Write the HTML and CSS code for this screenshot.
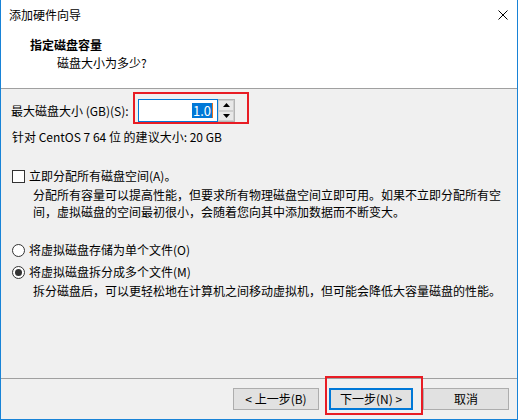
FILE: index.html
```html
<!DOCTYPE html>
<html lang="zh-CN">
  <head>
    <meta charset="UTF-8" />
    <meta name="viewport" content="width=device-width, initial-scale=1.0" />
    <title>添加硬件向导</title>
    <link rel="stylesheet" href="styles.css">
  </head>
  <body>
    <div class="window">
      <div class="titlebar">
        <span class="title">添加硬件向导</span>
        <svg class="close" width="10" height="10" viewBox="0 0 10 10">
          <path d="M0.5 0.5 L9.5 9.5 M9.5 0.5 L0.5 9.5" stroke="#000" stroke-width="1" fill="none" />
        </svg>
      </div>

      <div class="header">
        <h1>指定磁盘容量</h1>
        <p>磁盘大小为多少?</p>
      </div>

      <div class="main">
        <div class="size-row">
          <label>最大磁盘大小 (GB)(S):</label>
          <div class="spin">
            <div class="spin-input"><span class="sel">1.0</span><span class="caret"></span></div>
            <div class="spin-buttons">
              <div class="spin-btn">
                <svg width="7" height="4" viewBox="0 0 7 4"><path d="M3.5 0 L7 4 L0 4 Z" fill="#000" /></svg>
              </div>
              <div class="spin-btn">
                <svg width="7" height="4" viewBox="0 0 7 4"><path d="M0 0 L7 0 L3.5 4 Z" fill="#000" /></svg>
              </div>
            </div>
          </div>
        </div>
        <p class="hint">针对 CentOS 7 64 位 的建议大小: 20 GB</p>

        <div class="option check-row">
          <span class="checkbox"></span>
          <span>立即分配所有磁盘空间(A)。</span>
        </div>
        <p class="desc">分配所有容量可以提高性能，但要求所有物理磁盘空间立即可用。如果不立即分配所有空<br>间，虚拟磁盘的空间最初很小，会随着您向其中添加数据而不断变大。</p>

        <div class="option radio-row first">
          <span class="radio"></span>
          <span>将虚拟磁盘存储为单个文件(O)</span>
        </div>
        <div class="option radio-row">
          <span class="radio checked"></span>
          <span>将虚拟磁盘拆分成多个文件(M)</span>
        </div>
        <p class="desc">拆分磁盘后，可以更轻松地在计算机之间移动虚拟机，但可能会降低大容量磁盘的性能。</p>
      </div>

      <div class="footer">
        <button class="btn btn-prev">&lt; 上一步(B)</button>
        <button class="btn btn-next">下一步(N) &gt;</button>
        <button class="btn btn-cancel">取消</button>
      </div>

      <div class="mark mark-size"></div>
      <div class="mark mark-next"></div>
    </div>
  </body>
</html>
```

FILE: styles.css
```css
* {
  margin: 0;
  padding: 0;
  box-sizing: border-box;
  font-family: "Noto Sans CJK SC", "Noto Sans", sans-serif;
}

body {
  width: 518px;
  height: 420px;
  overflow: hidden;
  font-size: 12px;
  color: #000;
}

.window {
  position: relative;
  width: 518px;
  height: 420px;
  display: flex;
  flex-direction: column;
  background: #f0f0f0;
  border: 1px solid #1883d7;
  border-top: none;
}

.titlebar {
  height: 30px;
  background: #fff;
  display: flex;
  align-items: center;
  justify-content: space-between;
  padding: 0 9px 0 8px;
  line-height: 16px;
}

.close {
  display: block;
  margin-top: -1px;
}

.header {
  height: 59px;
  background: #fff;
  border-bottom: 1px solid #a0a0a0;
  padding-top: 7px;
}

.header h1 {
  font-size: 12px;
  font-weight: bold;
  line-height: 16px;
  padding-left: 29px;
}

.header p {
  line-height: 16px;
  margin-top: 2px;
  padding-left: 56px;
}

.main {
  flex: 1;
  padding-left: 10px;
}

.size-row {
  display: flex;
  align-items: center;
  height: 23px;
  margin-top: 10px;
}

.size-row label {
  width: 127px;
  line-height: 16px;
}

.spin {
  display: flex;
  height: 23px;
}

.spin-input {
  width: 80px;
  height: 23px;
  background: #fff;
  border: 1px solid #0078d7;
  display: flex;
  align-items: center;
  justify-content: flex-end;
  padding-right: 4px;
}

.sel {
  background: #0078d7;
  color: #fff;
  line-height: 15px;
  font-size: 13px;
  padding: 0 1px;
}

.caret {
  width: 1px;
  height: 15px;
  background: #e07020;
}

.spin-buttons {
  width: 17px;
  display: flex;
  flex-direction: column;
  border: 1px solid #b4b4b4;
  border-left: none;
  background: #f0f0f0;
}

.spin-btn {
  flex: 1;
  display: flex;
  align-items: center;
  justify-content: center;
  border: 1px solid #cfcfcf;
  background: #e8e8e8;
}

.spin-btn svg {
  display: block;
}

.hint {
  line-height: 16px;
  margin-top: 7px;
  padding-left: 1px;
}

.option {
  display: flex;
  align-items: center;
  height: 16px;
  line-height: 16px;
}

.check-row {
  margin-top: 23px;
}

.checkbox {
  width: 13px;
  height: 13px;
  background: #fff;
  border: 1px solid #333;
  margin-right: 4px;
  margin-left: 1px;
}

.desc {
  line-height: 17px;
  margin-top: 2px;
  padding-left: 22px;
}

.radio-row.first {
  margin-top: 22px;
}

.radio-row + .radio-row {
  margin-top: 6px;
}

.radio {
  width: 13px;
  height: 13px;
  border: 1px solid #333;
  border-radius: 50%;
  background: #fff;
  margin-right: 4px;
  margin-left: 1px;
  position: relative;
}

.radio.checked::after {
  content: "";
  position: absolute;
  left: 2px;
  top: 2px;
  width: 7px;
  height: 7px;
  border-radius: 50%;
  background: #333;
}

.footer {
  height: 41px;
  border-top: 1px solid #a0a0a0;
  display: flex;
  justify-content: flex-end;
  align-items: flex-start;
  gap: 10px;
  padding: 9px 8px 0 0;
}

.btn {
  height: 22px;
  background: #e1e1e1;
  border: 1px solid #adadad;
  font-size: 12px;
  line-height: 16px;
  color: #000;
}

.btn-prev {
  width: 86px;
}

.btn-next {
  width: 84px;
  border: 2px solid #0078d7;
}

.btn-cancel {
  width: 86px;
}

.mark {
  position: absolute;
  border: 2px solid #e81c24;
}

.mark-size {
  left: 132px;
  top: 92px;
  width: 116px;
  height: 32px;
}

.mark-next {
  left: 324px;
  top: 376px;
  width: 98px;
  height: 39px;
}
```
